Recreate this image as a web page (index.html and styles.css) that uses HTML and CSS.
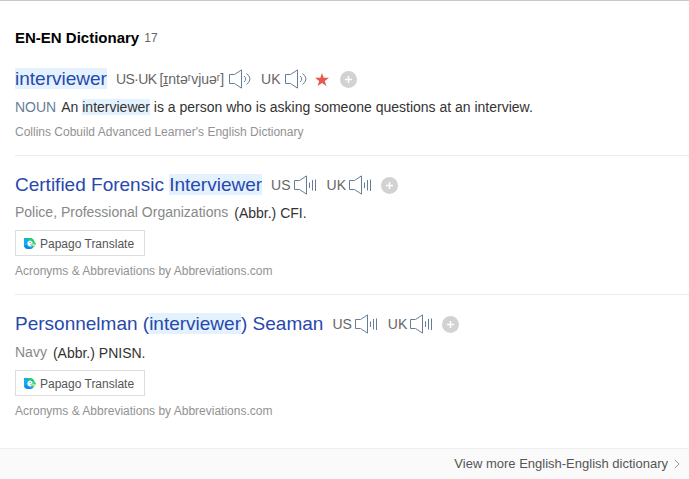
FILE: index.html
```html
<!DOCTYPE html>
<html lang="en">
<head>
<meta charset="utf-8">
<title>EN-EN Dictionary</title>
<link rel="stylesheet" href="styles.css">
</head>
<body>
<svg class="defs" width="0" height="0">
  <defs>
    <symbol id="wave" viewBox="0 0 24 20"><path d="M1.500 5.500H6.500L13.500.9V19.100L6.500 14.500H1.500Z" fill="none" stroke="#667d99"/><path d="M16 7Q19.500 10 16 13M18.500 4.500Q25.500 10 18.500 15.500" fill="none" stroke="#667d99"/></symbol>
    <symbol id="bars" viewBox="0 0 24 20"><path d="M1.500 5.500H6.500L13.500.9V19.100L6.500 14.500H1.500Z" fill="none" stroke="#667d99"/><path d="M16.500 7.500V13M19.500 5V15.500M22.500 4.500V16" fill="none" stroke="#667d99"/></symbol>
    <symbol id="plus" viewBox="0 0 17 17"><circle cx="8.500" cy="8.500" r="8.500" fill="#d2d2d2"/><path d="M8.500 5V12M5 8.500H12" stroke="#fff" stroke-width="1.400"/></symbol>
    <symbol id="papago" viewBox="0 0 12 11"><path d="M0 0H5Q9 0 10 4L12 5.500 10.500 8Q9.500 10.500 6 11H3Q0 10 0 7Z" fill="#13aee8"/><path d="M4 0H5.500Q10 0 10.500 4L12 5.500H9Q8 2.500 4 2Z" fill="#22ce69"/><path d="M0 8Q1 11 6 11L9 10Q4 10 2 7Z" fill="#1683e2"/><path d="M6 2.500A3 3 0 1 0 8 8L6 6.500 9 5Q8 2.500 6 2.500Z" fill="#fff"/><circle cx="6.300" cy="4.500" r=".6" fill="#52809c"/><path d="M6 6.500L9 5.500 12 6 10 9Q9 7.500 6 6.500Z" fill="#b9ec72"/></symbol>
  </defs>
</svg>
<main class="dictionary">
  <header class="heading"><h1>EN-EN Dictionary</h1><span class="count">17</span></header>
  <section class="entry first">
    <div class="word-row"><a class="word"><mark>interviewer</mark></a><span class="region both">US·UK</span><span class="phonetic">[<u>ɪ</u>ntəʳvjuəʳ]</span><svg class="speaker"><use href="#wave"/></svg><span class="region uk">UK</span><svg class="speaker"><use href="#wave"/></svg><svg class="star" viewBox="0 0 14 13"><path d="M7 0L8.700 4.700H14L9.800 8 11.400 13 7 10 2.600 13 4.200 8 0 4.700H5.300Z" fill="#e35b50"/></svg><svg class="plus"><use href="#plus"/></svg></div>
    <p class="meaning"><span class="pos">NOUN</span><span>An <mark>interviewer</mark> is a person who is asking someone questions at an interview.</span></p>
    <p class="source">Collins Cobuild Advanced Learner's English Dictionary</p>
  </section>
  <section class="entry">
    <div class="word-row"><a class="word">Certified Forensic <mark>Interviewer</mark></a><span class="region">US</span><svg class="speaker"><use href="#bars"/></svg><span class="region uk">UK</span><svg class="speaker"><use href="#bars"/></svg><svg class="plus"><use href="#plus"/></svg></div>
    <p class="meaning"><span class="topic">Police, Professional Organizations</span><span>(Abbr.) CFI.</span></p>
    <button class="translate"><svg class="papago"><use href="#papago"/></svg>Papago Translate</button>
    <p class="source">Acronyms &amp; Abbreviations by Abbreviations.com</p>
  </section>
  <section class="entry">
    <div class="word-row"><a class="word">Personnelman (<mark>interviewer</mark>) Seaman</a><span class="region">US</span><svg class="speaker"><use href="#bars"/></svg><span class="region uk">UK</span><svg class="speaker"><use href="#bars"/></svg><svg class="plus"><use href="#plus"/></svg></div>
    <p class="meaning"><span class="topic">Navy</span><span>(Abbr.) PNISN.</span></p>
    <button class="translate"><svg class="papago"><use href="#papago"/></svg>Papago Translate</button>
    <p class="source">Acronyms &amp; Abbreviations by Abbreviations.com</p>
  </section>
</main>
<footer class="more"><span>View more English-English dictionary</span><svg class="chevron" viewBox="0 0 6 10"><path d="M.8.800L5 5 .8 9.200" fill="none" stroke="#999"/></svg></footer>
</body>
</html>
```
FILE: styles.css
```css
* { box-sizing: border-box; }
body {
  margin: 0;
  height: 479px;
  overflow: hidden;
  background: #fff;
  border-top: 1px solid #c8c8c8;
  color: #333;
  font: 14px/20px "Liberation Sans", Arial, sans-serif;
  white-space: nowrap;
}
.defs { display: block; height: 0; }
.dictionary { height: 447px; padding: 27px 0 0 15px; }
.heading { display: flex; align-items: center; height: 20px; }
h1 { margin: 0; font-size: 15px; color: #000; }
.count { margin-left: 5px; font-size: 12px; color: #666; }
p { margin: 0; }
mark { background: #e3f2fe; color: inherit; }
svg { flex: none; }
.entry { height: 139px; padding-top: 18px; border-top: 1px solid #ebebeb; }
.entry:last-child { height: 140px; }
.entry.first { height: 107px; padding-top: 20px; border: 0; }
.word-row { display: flex; align-items: center; height: 22px; }
.word { font-size: 19px; line-height: 22px; color: #2848ad; }
.region { margin-left: 9px; color: #666; }
.region.both { letter-spacing: -0.6px; }
.phonetic { margin-left: 3px; color: #666; }
.speaker { width: 24px; height: 20px; margin-left: 2px; }
.phonetic + .speaker { margin-left: 4px; }
.region.uk { margin-left: 10px; }
.first .region.uk { margin-left: 9px; }
.first .uk + .speaker { margin-left: 3px; }
.star { width: 14px; height: 13px; margin-left: 7px; }
.plus { width: 17px; height: 17px; margin-left: 9px; }
.star + .plus { margin-left: 11px; }
.meaning { display: flex; margin-top: 7px; line-height: 20px; }
.pos { margin: 0 5px 0 0; color: #667d99; }
.topic { margin: -1px 6px 0 0; color: #888; }
.source { height: 16px; margin-top: 7px; font-size: 12px; line-height: 16px; color: #929292; }
.translate {
  display: flex;
  align-items: center;
  width: 130px;
  height: 26px;
  margin: 7px 0 0;
  padding: 1px 0 0 8px;
  border: 1px solid #ddd;
  background: #fff;
  color: #555;
  font: 12px/16px "Liberation Sans", Arial, sans-serif;
}
.papago { width: 12px; height: 11px; margin-right: 4px; }
.entry:last-child .meaning { margin-top: 8px; }
.more {
  display: flex;
  align-items: center;
  justify-content: flex-end;
  height: 31px;
  padding-right: 9px;
  border-top: 1px solid #eee;
  background: #fafafa;
  color: #555;
  font-size: 13px;
}
.chevron { width: 6px; height: 10px; margin-left: 6px; }
```
